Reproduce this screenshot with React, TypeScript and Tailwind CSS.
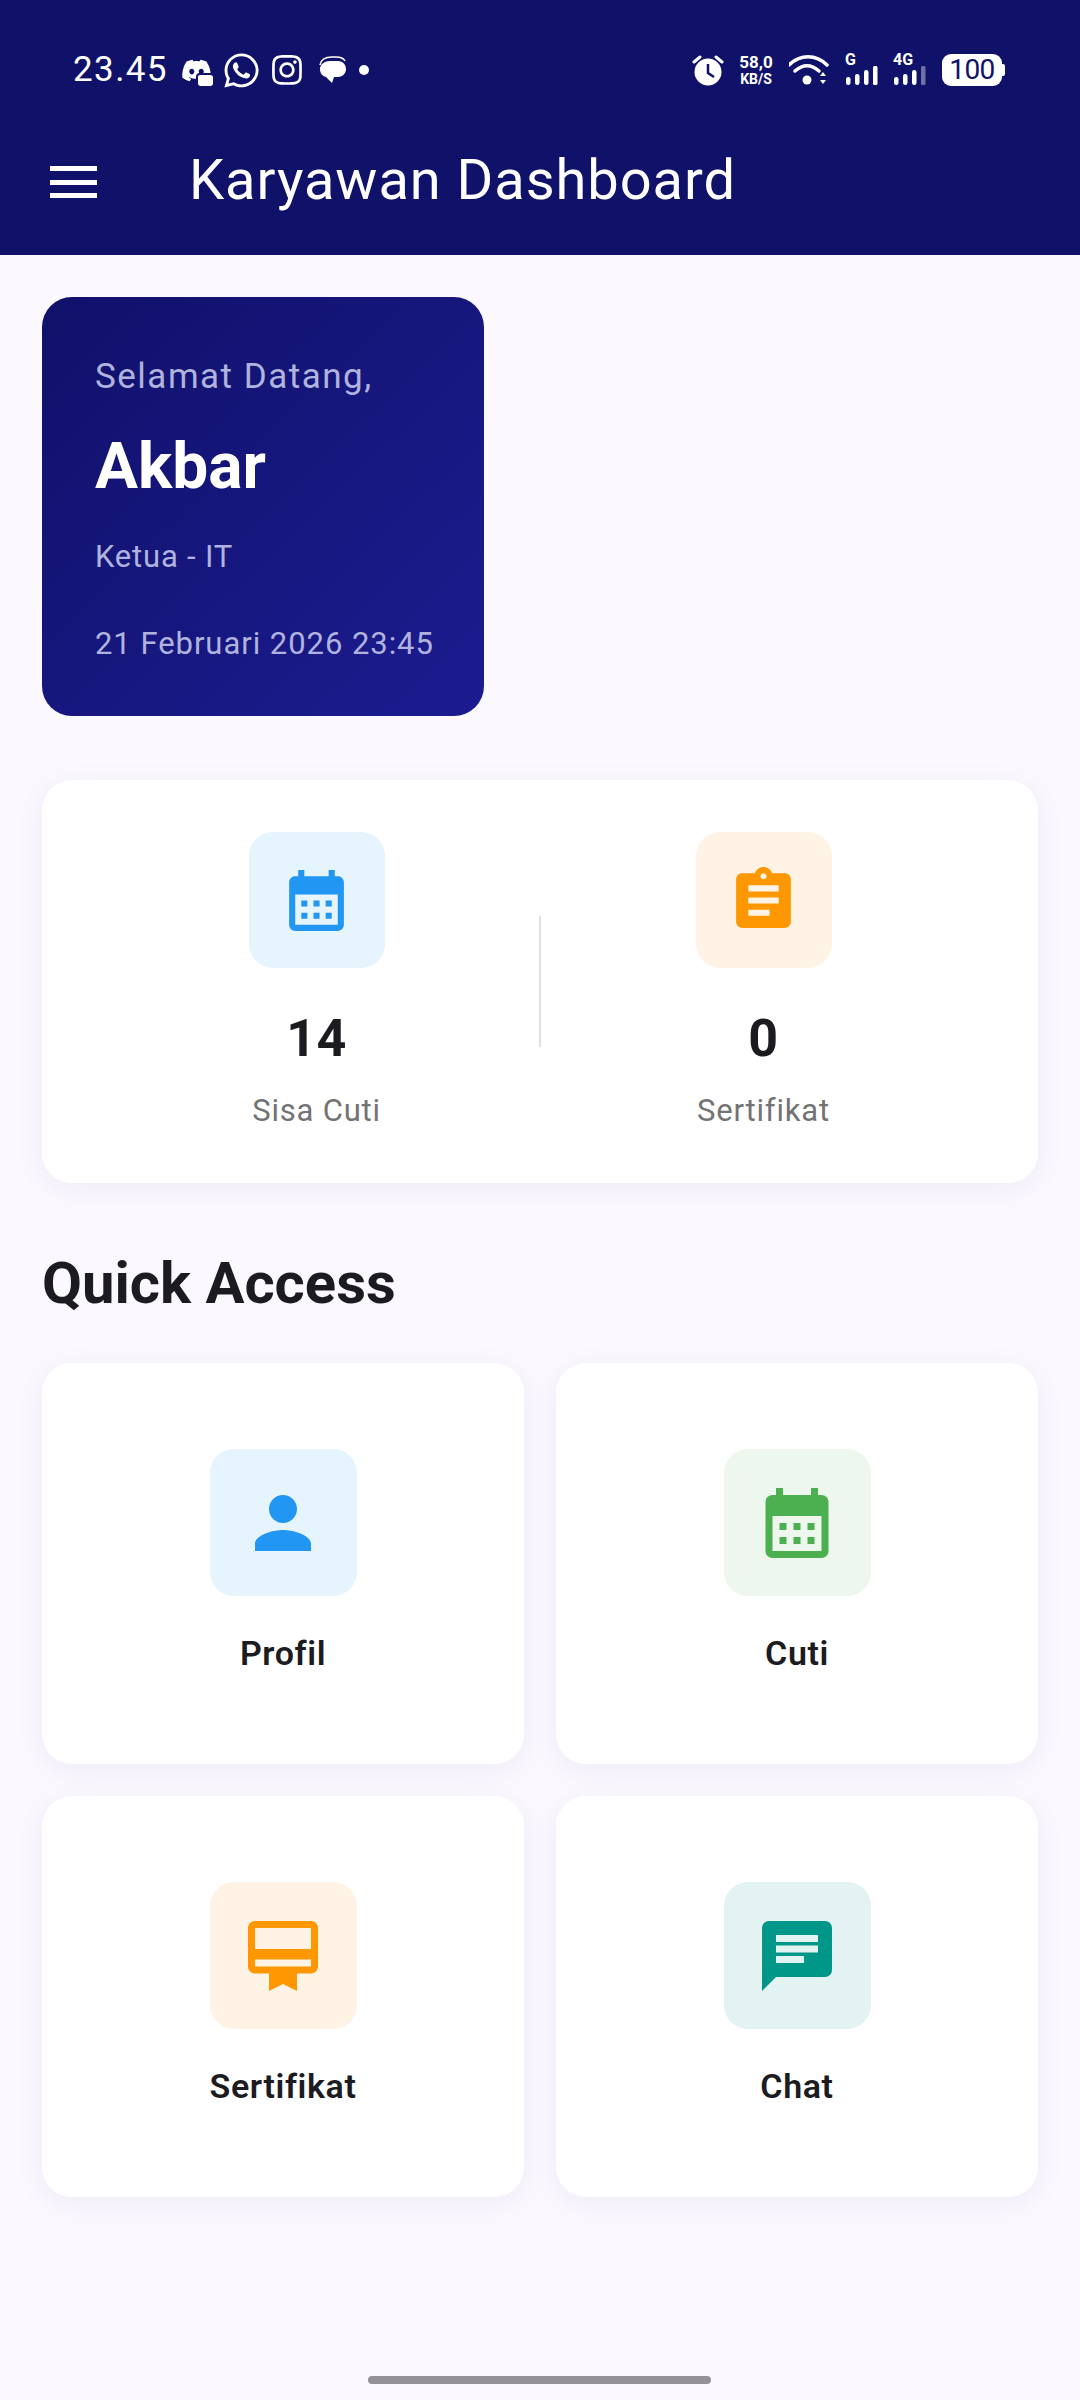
import React from 'react';
import { FaDiscord, FaInstagram, FaWhatsapp } from 'react-icons/fa';
import { MdAssignment, MdCalendarMonth, MdCardMembership, MdChat, MdPerson } from 'react-icons/md';

const SignalBars = ({ label, dim }: { label: string; dim?: boolean }) => (
  <div className="relative w-[33px] h-[32px]">
    <span className="absolute left-0 top-[-2px] text-[16px] leading-[16px] font-bold text-white">{label}</span>
    <svg width="33" height="20" viewBox="0 0 33 20" className="absolute left-0 bottom-0">
      <rect x="1" y="11" width="4.5" height="8" rx="2.2" fill="#fff" />
      <rect x="10" y="8" width="4.5" height="11" rx="2.2" fill="#fff" />
      <rect x="19" y="4" width="4.5" height="15" rx="2.2" fill="#fff" />
      <rect x="28" y="0" width="4.5" height="19" rx="1.5" fill="#fff" fillOpacity={dim ? 0.4 : 1} />
    </svg>
  </div>
);

const StatusBar = () => (
  <div className="h-[91px] pl-[73px] pr-[78px] pt-[50px] flex justify-between items-start text-white">
    <div className="flex items-center h-[40px]">
      <span className="text-[35px] leading-[40px] tracking-[1.4px] font-['Roboto',sans-serif] mr-[13px]">23.45</span>
      <span className="relative w-[31px] h-[30px] mr-[10px]">
        <FaDiscord size={31} />
        <span className="absolute right-[-1px] bottom-[-1px] w-[15px] h-[11px] bg-white rounded-[2px] outline-2 outline-[#10126a]" />
      </span>
      <FaWhatsapp size={39} className="mr-[9px]" />
      <FaInstagram size={34} className="mr-[14px]" />
      <svg width="30" height="30" viewBox="0 0 30 30" className="mr-[11px]">
        <path d="M2 10C3 4 8 2 14 2h4c5 0 8 2 9 4" fill="none" stroke="#fff" strokeWidth="1.5" />
        <path d="M2 14c0-5 5-8 10-8h8c5 0 8 4 8 8s-3 8-8 8h-4l-2 6-6-6c-4-1-6-4-6-8z" fill="#fff" />
      </svg>
      <span className="w-[10px] h-[10px] rounded-full bg-white" />
    </div>
    <div className="flex items-center h-[40px]">
      <svg width="32" height="32" viewBox="0 0 32 32" className="mr-[13px]">
        <circle cx="16" cy="18" r="13.5" fill="#fff" />
        <path d="M16 10v9l6 4" fill="none" stroke="#10126a" strokeWidth="2.5" />
        <path d="M2 8l6-5M30 8l-6-5" stroke="#fff" strokeWidth="3" strokeLinecap="round" />
      </svg>
      <div className="flex flex-col items-center w-[38px] mr-[14px] font-['Roboto',sans-serif] font-bold">
        <span className="text-[17px] leading-[17px]">58,0</span>
        <span className="text-[14px] leading-[16px]">KB/S</span>
      </div>
      <svg width="40" height="32" viewBox="0 0 40 32" className="mr-[16px]">
        <path d="M1 11c11-11 27-11 38 0" fill="none" stroke="#fff" strokeWidth="3.5" strokeLinecap="round" transform="translate(-1 0)" />
        <path d="M7 17c8-7 16-7 24 0" fill="none" stroke="#fff" strokeWidth="3.5" strokeLinecap="round" transform="translate(-1 0)" />
        <circle cx="18" cy="26" r="4.5" fill="#fff" />
        <path d="M31 22l3-4 3 4zM31 26l3 4 3-4z" fill="#fff" />
      </svg>
      <SignalBars label="G" />
      <div className="w-[15px]" />
      <SignalBars label="4G" dim />
      <div className="w-[16px]" />
      <div className="relative w-[60px] h-[32px] bg-white rounded-[9px] flex items-center justify-center text-[#10126a] text-[28px] leading-[32px] font-['Roboto',sans-serif] tracking-[-0.5px]">
        100
        <span className="absolute right-[-3px] top-[10px] w-[3px] h-[12px] bg-white rounded-r-[2px]" />
      </div>
    </div>
  </div>
);

const AppBar = () => (
  <div className="h-[164px] flex items-start pt-[73px] pl-[50px]">
    <div className="w-[47px] h-[32px] flex flex-col justify-between mt-[2px]">
      <span className="h-[5px] bg-white" />
      <span className="h-[5px] bg-white" />
      <span className="h-[5px] bg-white" />
    </div>
    <h1 className="ml-[92px] mt-[-16px] text-[56px] leading-[64px] tracking-[0.95px] text-white font-normal">Karyawan Dashboard</h1>
  </div>
);

const WelcomeCard = () => (
  <div className="w-[442px] h-[419px] rounded-[30px] bg-linear-to-br from-[#10116a] to-[#1c1c91] pl-[53px] pt-[59px] text-[#b0b3dd]">
    <p className="text-[35px] leading-[42px] tracking-[1.5px]">Selamat Datang,</p>
    <p className="mt-[32px] text-[64px] leading-[74px] font-bold text-white">Akbar</p>
    <p className="mt-[35px] text-[31px] leading-[36px] tracking-[0.8px]">Ketua - IT</p>
    <p className="mt-[51px] text-[31px] leading-[36px] tracking-[0.95px]">21 Februari 2026 23:45</p>
  </div>
);

const StatItem = ({ icon, bg, value, label }: { icon: React.ReactNode; bg: string; value: string; label: string }) => (
  <div className="flex-1 flex flex-col items-center">
    <div className={`w-[136px] h-[136px] rounded-[24px] flex items-center justify-center ${bg}`}>{icon}</div>
    <p className="mt-[41px] text-[52px] leading-[60px] tracking-[0.5px] font-bold text-[#1c1b1f]">{value}</p>
    <p className="mt-[24px] text-[31px] leading-[36px] tracking-[0.8px] text-[#737373]">{label}</p>
  </div>
);

const StatsCard = () => (
  <div className="mt-[64px] h-[403px] rounded-[30px] bg-white shadow-[0_6px_30px_rgba(60,40,120,0.06)] flex items-start px-[52px] pt-[52px]">
    <StatItem icon={<MdCalendarMonth size={73} color="#2196f3" />} bg="bg-[#e6f4fe]" value="14" label="Sisa Cuti" />
    <div className="w-[2px] h-[131px] mt-[84px] bg-[#e0e0e0]" />
    <StatItem icon={<MdAssignment size={73} color="#ff9800" />} bg="bg-[#fff3e6]" value="0" label="Sertifikat" />
  </div>
);

const QuickTile = ({ icon, bg, label }: { icon: React.ReactNode; bg: string; label: string }) => (
  <div className="h-[401px] rounded-[30px] bg-white shadow-[0_6px_30px_rgba(60,40,120,0.06)] flex flex-col items-center pt-[86px]">
    <div className={`w-[147px] h-[147px] rounded-[24px] flex items-center justify-center ${bg}`}>{icon}</div>
    <p className="mt-[37px] text-[34px] leading-[40px] tracking-[0.6px] font-semibold text-[#1c1b1f]">{label}</p>
  </div>
);

export default function App() {
  return (
    <div className="relative w-[1080px] h-[2400px] bg-[#fbf8ff] font-['Roboto',sans-serif] overflow-hidden">
      <header className="bg-[#10126a]">
        <StatusBar />
        <AppBar />
      </header>
      <main className="px-[42px] pt-[42px]">
        <WelcomeCard />
        <StatsCard />
        <h2 className="mt-[68px] text-[58px] leading-[64px] font-bold text-[#1c1b1f]">Quick Access</h2>
        <div className="mt-[48px] grid grid-cols-2 gap-x-[32px] gap-y-[32px]">
          <QuickTile icon={<MdPerson size={84} color="#2196f3" />} bg="bg-[#e6f4fe]" label="Profil" />
          <QuickTile icon={<MdCalendarMonth size={84} color="#4caf50" />} bg="bg-[#edf7ee]" label="Cuti" />
          <QuickTile icon={<MdCardMembership size={84} color="#ff9800" />} bg="bg-[#fff3e6]" label="Sertifikat" />
          <QuickTile icon={<MdChat size={84} color="#009688" />} bg="bg-[#e3f3f1]" label="Chat" />
        </div>
      </main>
      <div className="absolute left-[368px] top-[2376px] w-[343px] h-[8px] rounded-full bg-[#949296]" />
    </div>
  );
}
